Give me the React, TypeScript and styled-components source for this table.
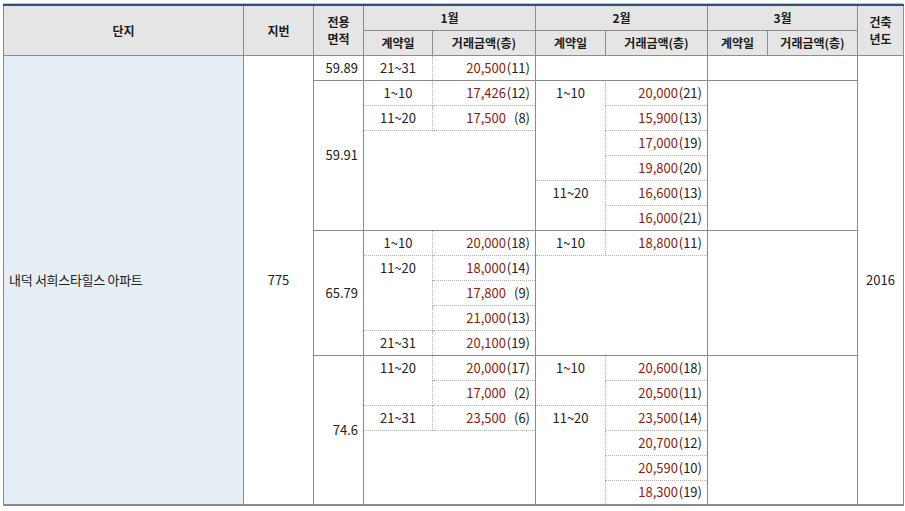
import styled, { createGlobalStyle } from 'styled-components';

const SOLID = '1px solid #8c8c8c';
const DOT = '1px dotted #b3b3b3';

const widths = [240, 70, 50, 69, 103, 70, 102, 60, 90, 46];

function Price({ amount, floor }: { amount: string; floor: string }) {
  return (
    <PriceCell>
      <Amount>{amount}</Amount>
      <Floor>({floor})</Floor>
    </PriceCell>
  );
}

function PriceFirst({ amount, floor }: { amount: string; floor: string }) {
  return (
    <PriceCell $first>
      <Amount>{amount}</Amount>
      <Floor>({floor})</Floor>
    </PriceCell>
  );
}

export default function App() {
  return (
    <Wrapper>
      <GlobalStyle />
      <TopLine />
      <Table>
        <colgroup>
          {widths.map((w, i) => (
            <Col key={i} $w={w} />
          ))}
        </colgroup>
        <thead>
          <HeadRow $h={25}>
            <Th rowSpan={2}>단지</Th>
            <Th rowSpan={2}>지번</Th>
            <Th rowSpan={2}>
              전용
              <br />
              면적
            </Th>
            <Th colSpan={2}>1월</Th>
            <Th colSpan={2}>2월</Th>
            <Th colSpan={2}>3월</Th>
            <Th rowSpan={2}>
              건축
              <br />
              년도
            </Th>
          </HeadRow>
          <HeadRow $h={25}>
            <Th>계약일</Th>
            <Th>거래금액(층)</Th>
            <Th>계약일</Th>
            <Th>거래금액(층)</Th>
            <Th>계약일</Th>
            <Th>거래금액(층)</Th>
          </HeadRow>
        </thead>
        <tbody>
          {/* 59.89 */}
          <Row>
            <NameCell rowSpan={18}>내덕 서희스타힐스 아파트</NameCell>
            <Cell rowSpan={18}>775</Cell>
            <AreaCell>59.89</AreaCell>
            <DateCell $first>21~31</DateCell>
            <PriceFirst amount="20,500" floor="11" />
            <Empty colSpan={2} $first />
            <Empty colSpan={2} $first />
            <Cell rowSpan={18}>2016</Cell>
          </Row>

          {/* 59.91 */}
          <Row>
            <AreaCell rowSpan={6}>59.91</AreaCell>
            <DateCell $first>1~10</DateCell>
            <PriceFirst amount="17,426" floor="12" />
            <DateCell $first rowSpan={4} $top>
              1~10
            </DateCell>
            <PriceFirst amount="20,000" floor="21" />
            <Empty colSpan={2} rowSpan={6} $first />
          </Row>
          <Row>
            <DateCell>11~20</DateCell>
            <Price amount="17,500" floor="8" />
            <Price amount="15,900" floor="13" />
          </Row>
          <Row>
            <Empty colSpan={2} rowSpan={4} />
            <Price amount="17,000" floor="19" />
          </Row>
          <Row>
            <Price amount="19,800" floor="20" />
          </Row>
          <Row>
            <DateCell rowSpan={2} $top>
              11~20
            </DateCell>
            <Price amount="16,600" floor="13" />
          </Row>
          <Row>
            <Price amount="16,000" floor="21" />
          </Row>

          {/* 65.79 */}
          <Row>
            <AreaCell rowSpan={5}>65.79</AreaCell>
            <DateCell $first>1~10</DateCell>
            <PriceFirst amount="20,000" floor="18" />
            <DateCell $first>1~10</DateCell>
            <PriceFirst amount="18,800" floor="11" />
            <Empty colSpan={2} rowSpan={5} $first />
          </Row>
          <Row>
            <DateCell rowSpan={3} $top>
              11~20
            </DateCell>
            <Price amount="18,000" floor="14" />
            <Empty colSpan={2} rowSpan={4} />
          </Row>
          <Row>
            <Price amount="17,800" floor="9" />
          </Row>
          <Row>
            <Price amount="21,000" floor="13" />
          </Row>
          <Row>
            <DateCell>21~31</DateCell>
            <Price amount="20,100" floor="19" />
          </Row>

          {/* 74.6 */}
          <Row>
            <AreaCell rowSpan={6}>74.6</AreaCell>
            <DateCell $first rowSpan={2} $top>
              11~20
            </DateCell>
            <PriceFirst amount="20,000" floor="17" />
            <DateCell $first rowSpan={2} $top>
              1~10
            </DateCell>
            <PriceFirst amount="20,600" floor="18" />
            <Empty colSpan={2} rowSpan={6} $first />
          </Row>
          <Row>
            <Price amount="17,000" floor="2" />
            <Price amount="20,500" floor="11" />
          </Row>
          <Row>
            <DateCell>21~31</DateCell>
            <Price amount="23,500" floor="6" />
            <DateCell rowSpan={4} $top>
              11~20
            </DateCell>
            <Price amount="23,500" floor="14" />
          </Row>
          <Row>
            <Empty colSpan={2} rowSpan={3} />
            <Price amount="20,700" floor="12" />
          </Row>
          <Row>
            <Price amount="20,590" floor="10" />
          </Row>
          <Row>
            <Price amount="18,300" floor="19" />
          </Row>
        </tbody>
      </Table>
    </Wrapper>
  );
}

const GlobalStyle = createGlobalStyle`
  body {
    margin: 0;
    background: #fff;
    font-family: "Noto Sans CJK KR", "Noto Sans", sans-serif;
  }
`;

const Wrapper = styled.div`
  padding: 3px 2px 0 3px;
`;

const TopLine = styled.div`
  width: 900px;
  height: 1px;
  background: #a8c7e4;
`;

const Table = styled.table`
  width: 900px;
  table-layout: fixed;
  border-collapse: collapse;
  border-top: 2px solid #2c5378;
  border-bottom: 2px solid #8a8a8a;
  font-size: 13px;
  color: #222;
`;

const Col = styled.col<{ $w: number }>`
  width: ${(p) => p.$w}px;
`;

const HeadRow = styled.tr<{ $h: number }>`
  height: ${(p) => p.$h}px;
`;

const Row = styled.tr`
  height: 25px;
`;

const Th = styled.th`
  padding: 0;
  background: #e5e5e5;
  border: ${SOLID};
  font-size: 12px;
  font-weight: bold;
  line-height: 17px;
  color: #1c1c1c;
  text-align: center;
  vertical-align: middle;
`;

const Cell = styled.td`
  padding: 0;
  border: ${SOLID};
  text-align: center;
  vertical-align: middle;
  line-height: 16px;
`;

const NameCell = styled(Cell)`
  background: #e5edf5;
  text-align: left;
  padding-left: 5px;
  letter-spacing: -0.3px;
`;

const AreaCell = styled(Cell)`
  text-align: right;
  padding-right: 5px;
`;

const DateCell = styled.td<{ $first?: boolean; $top?: boolean }>`
  padding: 0;
  border: ${DOT};
  border-left: ${SOLID};
  border-top: ${(p) => (p.$first ? SOLID : DOT)};
  text-align: center;
  vertical-align: ${(p) => (p.$top ? 'top' : 'middle')};
  line-height: 16px;
  padding-top: ${(p) => (p.$top ? '4px' : '0')};
`;

const PriceCell = styled.td<{ $first?: boolean }>`
  padding: 0 5px 0 0;
  border: ${DOT};
  border-right: ${SOLID};
  border-top: ${(p) => (p.$first ? SOLID : DOT)};
  text-align: right;
  vertical-align: middle;
  line-height: 16px;
  white-space: nowrap;
`;

const Empty = styled.td<{ $first?: boolean }>`
  padding: 0;
  border-left: ${SOLID};
  border-right: ${SOLID};
  border-top: ${(p) => (p.$first ? SOLID : 'none')};
  border-bottom: none;
`;

const Amount = styled.span`
  color: #8a1d10;
`;

const Floor = styled.span`
  display: inline-block;
  width: 24px;
  text-align: right;
  color: #222;
`;
